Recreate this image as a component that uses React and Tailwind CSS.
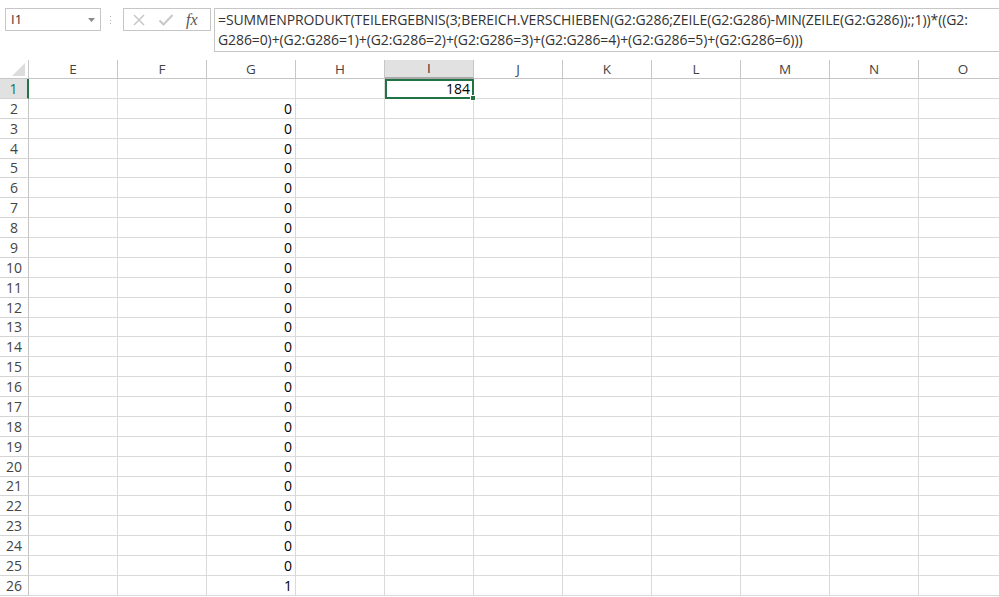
const cols = ["E", "F", "G", "H", "I", "J", "K", "L", "M", "N", "O"];
const gValues = { 1: "", 26: "1" };

function FormulaBar() {
  return (
    <div className="relative h-[60px] bg-white">
      <div className="flex items-start pt-2 pl-[5px]">
        <div className="flex h-[23px] w-[96px] items-center justify-between border border-[#c6c6c6] pl-[5px] pr-[5px] text-[13px] text-[#333]">
          <span>I1</span>
          <svg width="7" height="4" viewBox="0 0 7 4">
            <path d="M0 0h7L3.5 4z" fill="#8a8a8a" />
          </svg>
        </div>
        <div className="ml-[9px] mt-[8px] flex h-[8px] w-[2px] flex-col justify-between">
          <span className="block h-[1px] w-[1px] bg-[#b0b0b0]" />
          <span className="block h-[1px] w-[1px] bg-[#b0b0b0]" />
          <span className="block h-[1px] w-[1px] bg-[#b0b0b0]" />
        </div>
        <div className="ml-[11px] flex h-[23px] w-[88px] items-center border border-[#c6c6c6] pl-[8px]">
          <svg width="14" height="14" viewBox="0 0 14 14">
            <path d="M2 2l10 10M12 2L2 12" stroke="#c8c8c8" strokeWidth="1.5" />
          </svg>
          <svg className="ml-[12px]" width="16" height="14" viewBox="0 0 16 14">
            <path d="M1.5 7.5l4 4L14.5 2" stroke="#c8c8c8" strokeWidth="2" fill="none" />
          </svg>
          <span
            className="ml-[12px] text-[16px] italic text-[#555]"
            style={{ fontFamily: '"Liberation Serif", serif' }}
          >
            fx
          </span>
        </div>
        <div className="ml-[3px] h-[44px] flex-1 whitespace-nowrap border-t border-l border-b border-[#c6c6c6] pl-[3px] pt-[1px] text-[14px] leading-[20px] tracking-[-0.1px] text-[#333]">
          <div>=SUMMENPRODUKT(TEILERGEBNIS(3;BEREICH.VERSCHIEBEN(G2:G286;ZEILE(G2:G286)-MIN(ZEILE(G2:G286));;1))*((G2:</div>
          <div>G286=0)+(G2:G286=1)+(G2:G286=2)+(G2:G286=3)+(G2:G286=4)+(G2:G286=5)+(G2:G286=6)))</div>
        </div>
      </div>
    </div>
  );
}

function Grid() {
  const rows = Array.from({ length: 26 }, (_, i) => i + 1);
  return (
    <div className="grid grid-cols-[29px_repeat(11,89px)] text-[14px]">
      <div className="relative h-[19px] border-b border-r border-[#c6c6c6]">
        <svg className="absolute right-[3px] bottom-[2px]" width="13" height="13" viewBox="0 0 13 13">
          <path d="M13 0V13H0z" fill="#dcdcdc" />
        </svg>
      </div>
      {cols.map((c) => (
        <div
          key={c}
          className={
            c === "I"
              ? "flex h-[19px] items-center justify-center border-b-2 border-r border-b-[#a9a9a9] border-r-[#c6c6c6] bg-[#e1e1e1] text-[13.5px] text-[#333]"
              : "flex h-[19px] items-center justify-center border-b border-r border-[#c6c6c6] text-[13.5px] text-[#444]"
          }
        >
          {c}
        </div>
      ))}
      {rows.map((r) => (
        <Row key={r} r={r} />
      ))}
    </div>
  );
}

function Row({ r }) {
  const gVal = r in gValues ? gValues[r] : "0";
  return (
    <>
      <div
        className={
          r === 1
            ? "flex h-[19.875px] items-center justify-center border-b border-r-2 border-b-[#d4d4d4] border-r-[#217346] bg-[#e1e1e1] text-[#217346]"
            : "flex h-[19.875px] items-center justify-center border-b border-r border-b-[#d4d4d4] border-r-[#c6c6c6] text-[#444]"
        }
      >
        {r}
      </div>
      {cols.map((c) => {
        if (r === 1 && c === "I") {
          return (
            <div
              key={c}
              className="relative flex h-[19.875px] items-center justify-end border-2 border-[#217346] pr-[2px] text-black"
            >
              184
              <span className="absolute -bottom-[4px] -right-[4px] h-[6px] w-[6px] border border-white bg-[#217346]" />
            </div>
          );
        }
        return (
          <div
            key={c}
            className="flex h-[19.875px] items-center justify-end border-b border-r border-[#dadada] pr-[3px] text-black"
          >
            {c === "G" ? gVal : ""}
          </div>
        );
      })}
    </>
  );
}

export default function App() {
  return (
    <div
      className="h-[597px] w-[999px] overflow-hidden bg-white"
      style={{ fontFamily: '"Open Sans", "Noto Sans", sans-serif' }}
    >
      <FormulaBar />
      <Grid />
    </div>
  );
}
